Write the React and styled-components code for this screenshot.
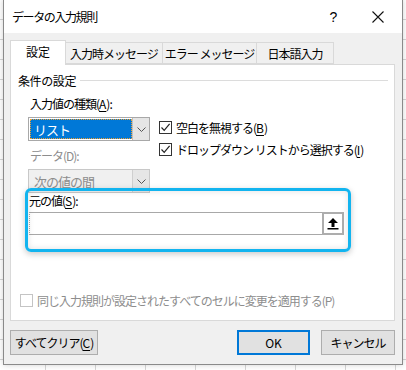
import React from 'react';
import styled, { createGlobalStyle } from 'styled-components';

const GlobalStyle = createGlobalStyle`
  html, body {
    margin: 0;
    padding: 0;
    width: 406px;
    height: 370px;
    overflow: hidden;
    background-color: #ffffff;
    background-image:
      repeating-linear-gradient(to right, transparent 0 45px, #d6d6d6 45px 46px, transparent 46px 50px),
      repeating-linear-gradient(to bottom, transparent 0 19px, #d6d6d6 19px 20px);
  }
  * { box-sizing: border-box; }
  #root {
    font-family: "Noto Sans CJK JP", "Noto Sans", sans-serif;
    font-size: 12px;
    letter-spacing: -1px;
    color: #000;
  }
`;

const Dialog = styled.div`
  margin: -1px 0 0 3px;
  width: 400px;
  height: 366px;
  border: 1px solid #8a8a8a;
  background: #f0f0f0;
  display: flex;
  flex-direction: column;
  box-shadow: 0 0 6px rgba(0, 0, 0, 0.18);
`;

const TitleBar = styled.div`
  height: 33px;
  background: #fff;
  display: flex;
  align-items: center;
  padding-left: 8px;
`;

const Title = styled.div`
  flex: 1;
  font-size: 12px;
  letter-spacing: -1.4px;
`;

const TitleButton = styled.div`
  width: ${(p) => p.w}px;
  display: flex;
  justify-content: center;
  align-items: center;
  font-family: "Liberation Sans", sans-serif;
  font-size: 14px;
`;

const Body = styled.div`
  flex: 1;
  display: flex;
  flex-direction: column;
  padding: 7px 7px 0 6px;
`;

const TabRow = styled.div`
  display: flex;
  align-items: flex-end;
  height: 24px;
  position: relative;
  z-index: 1;
`;

const Tab = styled.div`
  height: ${(p) => (p.active ? 25 : 22)}px;
  width: ${(p) => p.w}px;
  margin-bottom: ${(p) => (p.active ? -1 : 0)}px;
  background: ${(p) => (p.active ? '#fff' : '#f0f0f0')};
  border: 1px solid #d9d9d9;
  border-bottom: ${(p) => (p.active ? 'none' : '1px solid #d9d9d9')};
  margin-left: ${(p) => (p.first ? 0 : -1)}px;
  display: flex;
  align-items: center;
  justify-content: center;
  padding-bottom: ${(p) => (p.active ? 3 : 0)}px;
  font-size: 12px;
  letter-spacing: ${(p) => (p.active ? 0 : -1)}px;
`;

const Panel = styled.div`
  width: 385px;
  height: 257px;
  background: #fff;
  border: 1px solid #d9d9d9;
  display: flex;
  flex-direction: column;
  padding: 7px 6px 0 7px;
`;

const GroupHeader = styled.div`
  display: flex;
  align-items: center;
  gap: 4px;
  height: 16px;
  letter-spacing: -0.4px;
  &::after {
    content: '';
    flex: 1;
    height: 1px;
    background: #dcdcdc;
  }
`;

const Settings = styled.div`
  display: flex;
  padding-left: 10px;
  margin-top: 8px;
`;

const LeftCol = styled.div`
  width: 131px;
  display: flex;
  flex-direction: column;
`;

const RightCol = styled.div`
  display: flex;
  flex-direction: column;
  gap: 9px;
  padding-top: 25px;
`;

const Label = styled.div`
  height: 16px;
  line-height: 16px;
  padding-left: 2px;
  color: ${(p) => (p.disabled ? '#8d8d8d' : '#000')};
  margin-top: ${(p) => p.mt || 0}px;
`;

const Select = styled.div`
  width: 122px;
  height: 24px;
  margin-top: 5px;
  border: 1px solid ${(p) => (p.disabled ? '#c8c8c8' : '#a8a8a8')};
  background: ${(p) => (p.disabled ? '#f0f0f0' : '#fff')};
  display: flex;
  padding: 1px 0 1px 1px;
`;

const SelectValue = styled.div`
  flex: 1;
  display: flex;
  align-items: center;
  padding-left: 4px;
  background: ${(p) => (p.selected ? '#0078d7' : 'transparent')};
  color: ${(p) => (p.selected ? '#fff' : '#8d8d8d')};
  outline: ${(p) => (p.selected ? '1px dotted #f0a030' : 'none')};
  outline-offset: -1px;
  font-size: 13px;
`;

const SelectArrow = styled.div`
  width: 17px;
  margin: -1px 0;
  display: flex;
  align-items: center;
  justify-content: center;
  background: ${(p) => (p.disabled ? '#e6e6e6' : '#e5e5e5')};
  border-left: 1px solid ${(p) => (p.disabled ? '#cfcfcf' : '#c0c0c0')};
`;

const Check = styled.label`
  display: flex;
  align-items: center;
  gap: 4px;
  height: 13px;
  color: ${(p) => (p.disabled ? '#8d8d8d' : '#000')};
  font-size: 12px;
`;

const Box = styled.span`
  width: 13px;
  height: 13px;
  border: 1px solid ${(p) => (p.disabled ? '#c4c4c4' : '#333')};
  background: #fff;
  display: flex;
  align-items: center;
  justify-content: center;
`;

const Source = styled.div`
  position: relative;
  margin-top: -3px;
  padding-left: 11px;
  padding-right: 44px;
  display: flex;
  flex-direction: column;
`;

const Highlight = styled.div`
  position: absolute;
  left: 7px;
  top: -2px;
  width: 326px;
  height: 64px;
  border: 3px solid #12b4ef;
  border-radius: 6px;
  box-shadow: 0 2px 6px rgba(0, 0, 0, 0.22), inset 0 0 6px rgba(0, 0, 0, 0.12);
  pointer-events: none;
`;

const SourceLabel = styled.div`
  height: 16px;
  line-height: 16px;
  margin-top: 3px;
`;

const SourceInput = styled.div`
  margin-top: 3px;
  height: 23px;
  border: 1px solid #a8a8a8;
  border-left-style: dotted;
  display: flex;
  justify-content: flex-end;
`;

const RefButton = styled.div`
  width: 22px;
  margin: -1px -1px -1px 0;
  border: 2px solid #adadad;
  background: #fff;
  display: flex;
  align-items: center;
  justify-content: center;
`;

const ApplyRow = styled.div`
  margin-top: auto;
  margin-bottom: 13px;
  padding-left: 2px;
`;

const Footer = styled.div`
  display: flex;
  margin-top: 9px;
  gap: 11px;
`;

const Button = styled.button`
  height: 25px;
  width: ${(p) => p.w}px;
  margin-right: ${(p) => p.mr || 0}px;
  background: #e1e1e1;
  border: ${(p) => (p.primary ? '2px solid #0078d7' : '1px solid #adadad')};
  font-family: inherit;
  font-size: 12px;
  letter-spacing: ${(p) => (p.primary ? 0 : -1)}px;
  color: #000;
  padding: 0;
`;

const Chevron = () => (
  <svg width="9" height="5" viewBox="0 0 9 5">
    <polyline points="0.5,0.5 4.5,4.5 8.5,0.5" fill="none" stroke="#555" strokeWidth="1" />
  </svg>
);

const Tick = () => (
  <svg width="11" height="11" viewBox="0 0 11 11">
    <polyline points="1.5,5.5 4.2,8.3 9.6,1.8" fill="none" stroke="#222" strokeWidth="1.2" />
  </svg>
);

const UpArrow = () => (
  <svg width="12" height="13" viewBox="0 0 12 13">
    <polygon points="6,1 11,6 7.5,6 7.5,10 4.5,10 4.5,6 1,6" fill="#000" />
    <rect x="0.5" y="11" width="11" height="1.5" fill="#000" />
  </svg>
);

const Close = () => (
  <svg width="12" height="12" viewBox="0 0 12 12">
    <path d="M0.5 0.5 L11.5 11.5 M11.5 0.5 L0.5 11.5" stroke="#111" strokeWidth="1.1" />
  </svg>
);

const tabs = [
  { label: '設定', w: 56, active: true },
  { label: '入力時メッセージ', w: 98 },
  { label: 'エラー メッセージ', w: 95 },
  { label: '日本語入力', w: 78 },
];

const U = styled.span`
  text-decoration: underline;
  text-underline-offset: 2px;
  letter-spacing: 0;
`;

const App = () => (
  <>
    <GlobalStyle />
    <Dialog>
      <TitleBar>
        <Title>データの入力規則</Title>
        <TitleButton w={42}>?</TitleButton>
        <TitleButton w={48}><Close /></TitleButton>
      </TitleBar>
      <Body>
        <TabRow>
          {tabs.map((t, i) => (
            <Tab key={t.label} w={t.w} active={t.active} first={i === 0}>
              {t.label}
            </Tab>
          ))}
        </TabRow>
        <Panel>
          <GroupHeader>条件の設定</GroupHeader>
          <Settings>
            <LeftCol>
              <Label>入力値の種類(<U>A</U>):</Label>
              <Select>
                <SelectValue selected>リスト</SelectValue>
                <SelectArrow><Chevron /></SelectArrow>
              </Select>
              <Label disabled mt={7}>データ(D):</Label>
              <Select disabled>
                <SelectValue>次の値の間</SelectValue>
                <SelectArrow disabled><Chevron /></SelectArrow>
              </Select>
            </LeftCol>
            <RightCol>
              <Check>
                <Box><Tick /></Box>
                <span>空白を無視する(<U>B</U>)</span>
              </Check>
              <Check>
                <Box><Tick /></Box>
                <span>ドロップダウン リストから選択する(<U>I</U>)</span>
              </Check>
            </RightCol>
          </Settings>
          <Source>
            <Highlight />
            <SourceLabel>元の値(<U>S</U>):</SourceLabel>
            <SourceInput>
              <RefButton><UpArrow /></RefButton>
            </SourceInput>
          </Source>
          <ApplyRow>
            <Check disabled>
              <Box disabled />
              <span>同じ入力規則が設定されたすべてのセルに変更を適用する(P)</span>
            </Check>
          </ApplyRow>
        </Panel>
        <Footer>
          <Button w={88} mr={128}>すべてクリア(<U>C</U>)</Button>
          <Button w={73} primary>OK</Button>
          <Button w={74}>キャンセル</Button>
        </Footer>
      </Body>
    </Dialog>
  </>
);

export default App;
